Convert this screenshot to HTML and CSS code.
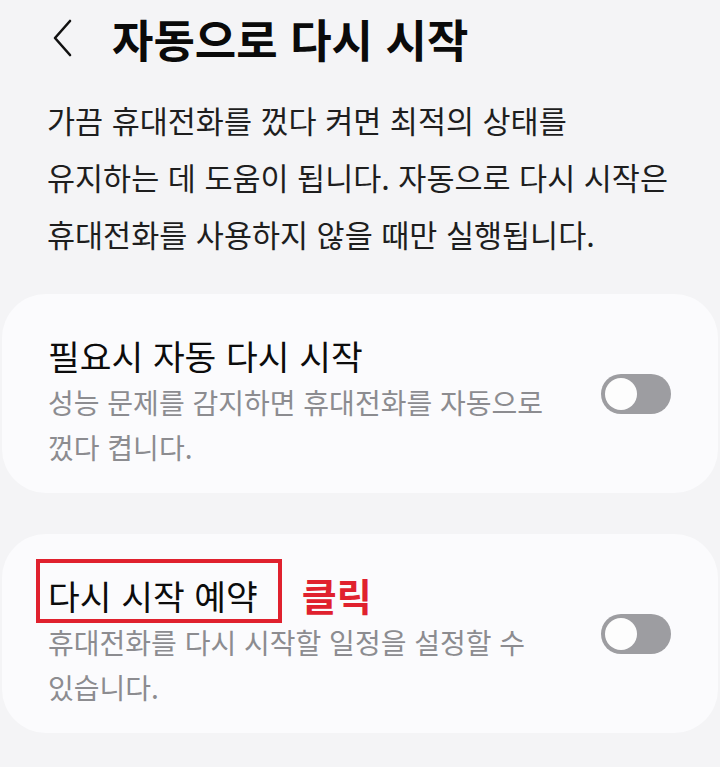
FILE: index.html
```html
<!DOCTYPE html>
<html lang="ko">
<head>
<meta charset="utf-8">
<title>자동으로 다시 시작</title>
<link rel="stylesheet" href="styles.css">
</head>
<body>
  <header class="appbar">
    <button class="back" aria-label="뒤로">
      <svg viewBox="0 0 20 38" width="20" height="38">
        <polyline points="18,2 3,19 18,36" fill="none" stroke="#111" stroke-width="2.6" stroke-linecap="round" stroke-linejoin="round"/>
      </svg>
    </button>
    <h1 class="title">자동으로 다시 시작</h1>
  </header>

  <p class="intro">가끔 휴대전화를 껐다 켜면 최적의 상태를<br>유지하는 데 도움이 됩니다. 자동으로 다시 시작은<br>휴대전화를 사용하지 않을 때만 실행됩니다.</p>

  <section class="card">
    <div class="card-text">
      <div class="card-title">필요시 자동 다시 시작</div>
      <div class="card-sub">성능 문제를 감지하면 휴대전화를 자동으로<br>껐다 켭니다.</div>
    </div>
    <span class="switch"><span class="knob"></span></span>
  </section>

  <section class="card">
    <div class="card-text">
      <div class="card-title"><span class="marked">다시 시작 예약</span><span class="note">클릭</span></div>
      <div class="card-sub">휴대전화를 다시 시작할 일정을 설정할 수<br>있습니다.</div>
    </div>
    <span class="switch"><span class="knob"></span></span>
  </section>
</body>
</html>
```

FILE: styles.css
```css
html, body {
  margin: 0;
  padding: 0;
}

body {
  width: 720px;
  height: 767px;
  overflow: hidden;
  background: #f4f4f6;
  font-family: "Noto Sans CJK KR", "Noto Sans", sans-serif;
  color: #111;
}

.appbar {
  display: flex;
  align-items: center;
  height: 76px;
  padding-left: 52px;
}

.back {
  display: flex;
  align-items: center;
  justify-content: center;
  width: 20px;
  height: 38px;
  padding: 0;
  border: 0;
  background: none;
}

.title {
  margin: 0 0 0 40px;
  font-size: 45px;
  font-weight: 700;
  line-height: 1;
  color: #0a0a0a;
}

.intro {
  margin: 16px 0 31px;
  padding: 0 47px;
  font-size: 30.5px;
  line-height: 57px;
  color: #1e1e1e;
  white-space: nowrap;
}

.card {
  display: flex;
  align-items: center;
  box-sizing: border-box;
  height: 199px;
  margin: 0 2px 41px;
  padding: 12px 47px 0 46px;
  background: #fbfbfd;
  border-radius: 44px;
}

.card-text {
  flex: 1;
  white-space: nowrap;
}

.card-title {
  display: flex;
  align-items: center;
  font-size: 34.5px;
  line-height: 50px;
  color: #0c0c0c;
}

.card-sub {
  font-size: 28px;
  line-height: 45px;
  color: #8c8c90;
}

/* highlight frame around the second title */
.marked {
  position: relative;
}

.marked::before {
  content: "";
  position: absolute;
  left: -12px;
  right: -24px;
  top: -11px;
  bottom: -3px;
  border: 4px solid #e0212e;
}

.note {
  margin-left: 44px;
  font-size: 38px;
  font-weight: 700;
  color: #e0212e;
}

.switch {
  display: flex;
  align-items: center;
  flex: none;
  align-self: center;
  box-sizing: border-box;
  width: 70px;
  height: 40px;
  margin-top: -12px;
  padding-left: 4px;
  border-radius: 20px;
  background: #9d9da1;
}

.knob {
  width: 32px;
  height: 32px;
  border-radius: 50%;
  background: #fdfdfd;
}
```
